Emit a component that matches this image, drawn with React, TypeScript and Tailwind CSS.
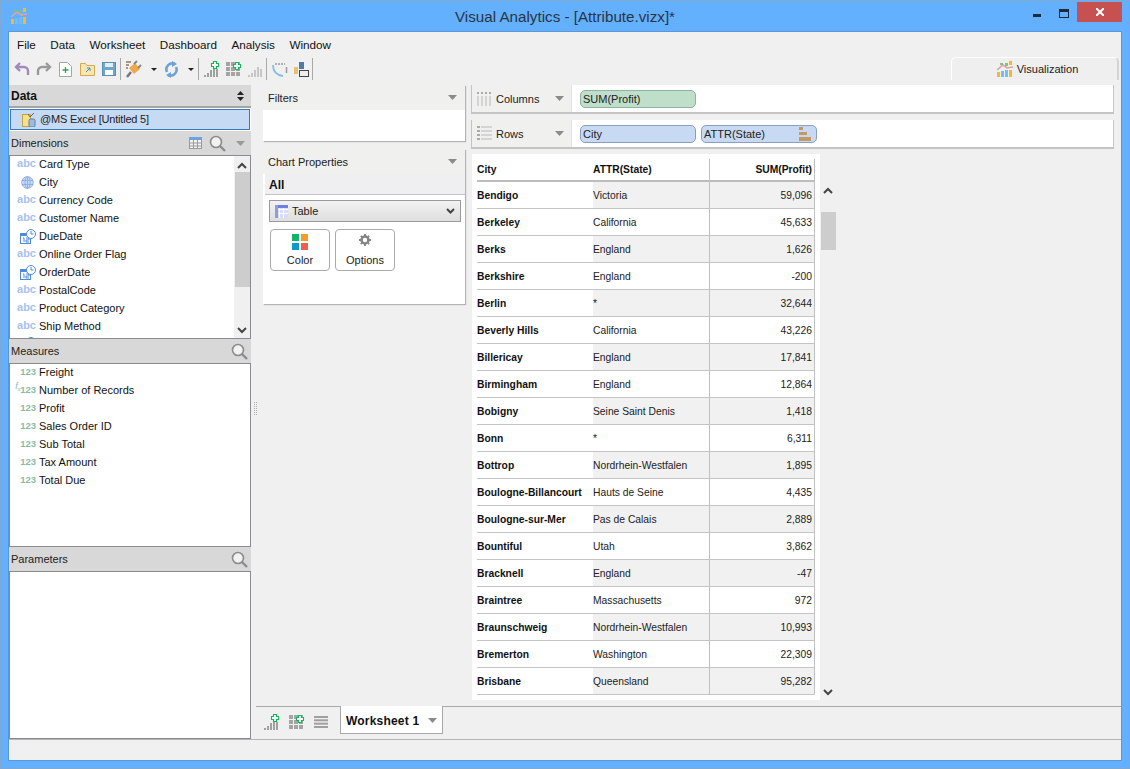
import React from "react";

const font = { fontFamily: '"Liberation Sans", Tahoma, sans-serif' };

const Caret = ({ c = "#8a8a8a", small }: { c?: string; small?: boolean }) => (
  <svg width={small ? 6 : 9} height={small ? 3 : 5} viewBox="0 0 9 5" preserveAspectRatio="none" className="shrink-0"><path d="M0 0h9L4.5 5z" fill={c} /></svg>
);

const Search = ({ c = "#8c8c8c" }: { c?: string }) => (
  <svg width="17" height="17" viewBox="0 0 17 17" className="shrink-0" fill="none">
    <circle cx="7" cy="7" r="5.5" stroke={c} strokeWidth="1.6" fill="#f2f2f2" />
    <path d="M11 11l5 5" stroke={c} strokeWidth="2.4" />
  </svg>
);

const LogoChart = ({ size = 16 }: { size?: number }) => (
  <svg width={size} height={size} viewBox="0 0 16 16" className="shrink-0">
    <rect x="0" y="11" width="3" height="5" fill="#fbb62f" />
    <rect x="4" y="10" width="3" height="6" fill="#6cc0f7" />
    <rect x="8" y="9" width="3" height="7" fill="#6cc0f7" />
    <rect x="12" y="9" width="3" height="7" fill="#fbb62f" />
    <path d="M0 9l6-5 4 3 6-1" stroke="#e0a0a8" strokeWidth="1.6" fill="none" />
    <rect x="3" y="2" width="3" height="2" fill="#7fc46f" />
    <rect x="8" y="2" width="3" height="3" fill="#7fc46f" />
    <rect x="12" y="0" width="3" height="4" fill="#fbb62f" />
  </svg>
);

const Abc = () => <span className="relative top-[-1px] text-[11px] font-bold leading-none text-[#a5c2ee]">abc</span>;

const Globe = () => (
  <svg width="13" height="13" viewBox="0 0 13 13" fill="none" stroke="#8fb0e6" strokeWidth="1" className="mr-[2px]">
    <circle cx="6.5" cy="6.5" r="5.8" fill="#c9d9f3" />
    <ellipse cx="6.5" cy="6.5" rx="2.6" ry="5.8" />
    <path d="M1 4.5h11M1 8.5h11M6.5 .7v11.6" />
  </svg>
);

const DateIcon = () => (
  <svg width="16" height="15" viewBox="0 0 16 15" fill="none">
    <rect x="0.5" y="4.5" width="10" height="10" fill="#fff" stroke="#4f8bd6" />
    <rect x="0" y="4" width="11" height="3" fill="#4f8bd6" />
    <path d="M3 9h1v4M6 9h3v2H6v2h3" stroke="#4f8bd6" strokeWidth="1" />
    <circle cx="11" cy="5" r="4.5" fill="#fff" stroke="#4f8bd6" />
    <path d="M11 2v3h2.5" stroke="#4f8bd6" />
  </svg>
);

const FieldRow = ({ icon, label }: { icon: React.ReactNode; label: string }) => (
  <div className="flex h-[18px] shrink-0 items-center">
    <div className="flex w-[29px] shrink-0 justify-end pr-[3px]">{icon}</div>
    <span className="text-[11px] leading-none text-[#111]">{label}</span>
  </div>
);

const Num = ({ f }: { f?: boolean }) => (
  <span className="relative text-[9.5px] leading-none font-bold text-[#8dbba6]">
    {f && <span className="absolute left-[-5px] top-[-3px] text-[9px] italic font-normal">f<sub className="text-[6px]">x</sub></span>}
    123
  </span>
);

const PanelHead = ({ label, children }: { label: string; children?: React.ReactNode }) => (
  <div className="flex h-[24px] shrink-0 items-center justify-between bg-[#d8d8d8] pl-[2px] pr-[3px] text-[11px] text-[#222]">
    <span className="pt-[1px]">{label}</span>
    <div className="flex items-center gap-[5px]">{children}</div>
  </div>
);

const dims: [string, "abc" | "geo" | "date"][] = [
  ["Card Type", "abc"], ["City", "geo"], ["Currency Code", "abc"], ["Customer Name", "abc"], ["DueDate", "date"],
  ["Online Order Flag", "abc"], ["OrderDate", "date"], ["PostalCode", "abc"], ["Product Category", "abc"], ["Ship Method", "abc"],
];
const measures = ["Freight", "Number of Records", "Profit", "Sales Order ID", "Sub Total", "Tax Amount", "Total Due"];

const rows: [string, string, string][] = [
  ["Bendigo", "Victoria", "59,096"], ["Berkeley", "California", "45,633"], ["Berks", "England", "1,626"],
  ["Berkshire", "England", "-200"], ["Berlin", "*", "32,644"], ["Beverly Hills", "California", "43,226"],
  ["Billericay", "England", "17,841"], ["Birmingham", "England", "12,864"], ["Bobigny", "Seine Saint Denis", "1,418"],
  ["Bonn", "*", "6,311"], ["Bottrop", "Nordrhein-Westfalen", "1,895"], ["Boulogne-Billancourt", "Hauts de Seine", "4,435"],
  ["Boulogne-sur-Mer", "Pas de Calais", "2,889"], ["Bountiful", "Utah", "3,862"], ["Bracknell", "England", "-47"],
  ["Braintree", "Massachusetts", "972"], ["Braunschweig", "Nordrhein-Westfalen", "10,993"], ["Bremerton", "Washington", "22,309"],
  ["Brisbane", "Queensland", "95,282"],
];

const Sep = () => <div className="mx-[3px] h-[22px] w-px bg-[#a8a8a8]" />;

const Plus = ({ x, y }: { x: number; y: number }) => (
  <path d={`M${x + 2.5} ${y + .5}h3v2h2v3h-2v2h-3v-2h-2v-3h2z`} fill="#fff" stroke="#12b85a" strokeWidth="1.1" />
);

const BarsPlus = ({ muted }: { muted?: boolean }) => (
  <svg width="16" height="16" viewBox="0 0 16 16" className="shrink-0">
    {[[0, 14, 2], [3, 12, 4], [6, 9, 7], [9, 6, 10], [12, 8, 8]].map(([x, y, h], i) => (
      <rect key={i} x={x} y={y} width="2" height={h} fill={muted ? "#c6c6c6" : "#a0a0a0"} />
    ))}
    {!muted && <Plus x={7} y={0} />}
  </svg>
);

const GridPlus = () => (
  <svg width="16" height="15" viewBox="0 0 16 15" className="shrink-0">
    {[0, 5, 10].flatMap((y) => [0, 5, 10].map((x) => <rect key={`${x}-${y}`} x={x} y={y} width="4" height="4" fill="#a4a4a4" />))}
    <Plus x={7} y={0} />
  </svg>
);

const Toolbar = () => (
  <div className="flex h-[24px] shrink-0 items-center pl-[5px]">
    <svg width="16" height="14" viewBox="0 0 16 14" fill="none" stroke="#a488bd" strokeWidth="2.4"><path d="M6 1L2 5l4 4" /><path d="M2 5h8a4 4 0 0 1 4 4v4" /></svg>
    <svg width="16" height="14" viewBox="0 0 16 14" fill="none" stroke="#9a9a9a" strokeWidth="2.4" className="ml-[6px]"><path d="M10 1l4 4-4 4" /><path d="M14 5H6a4 4 0 0 0-4 4v4" /></svg>
    <svg width="13" height="15" viewBox="0 0 13 15" className="ml-[7px]"><path d="M.5.5h8l4 4v10H.5z" fill="#fff" stroke="#a5a5a5" /><path d="M6.5 5v6M3.5 8h6" stroke="#2fa54f" strokeWidth="1.3" /></svg>
    <svg width="15" height="13" viewBox="0 0 15 13" className="ml-[8px]"><path d="M.5 12.5V.5h5l1.5 2h7.500v10z" fill="#fbe5b0" stroke="#d6a94f" /><path d="M6 9l4-4M7 5h3v3" stroke="#3c8fc9" fill="none" /></svg>
    <svg width="14" height="14" viewBox="0 0 14 14" className="ml-[7px]"><rect x=".5" y=".5" width="13" height="13" fill="#6fa6cc" stroke="#5a8fb5" /><rect x="3" y="1" width="8" height="4" fill="#e4eef6" /><rect x="3" y="8" width="8" height="5" fill="#fff" /></svg>
    <div className="ml-[1px]"><Sep /></div>
    <svg width="17" height="18" viewBox="0 0 17 18" className="ml-[1px]"><path d="M2 17l4-5" stroke="#777" strokeWidth="2.500" /><path d="M4 8l5 6 6-5-5-6z" fill="#f0a94a" /><path d="M9 4l3-3M13 8l3-3" stroke="#888" strokeWidth="2" /><path d="M1 2h5M1 5h3M1 8h2" stroke="#8a7a55" strokeWidth="1.500" /></svg>
    <div className="ml-[9px]"><Caret c="#222" small /></div>
    <svg width="15" height="17" viewBox="0 0 15 17" fill="none" stroke="#6fa3d8" strokeWidth="2.600" className="ml-[7px]"><path d="M11 3a6 6 0 0 0-8 8" /><path d="M4 14a6 6 0 0 0 8-8" /><path d="M8 0v6l5-3zM7 17v-6l-5 3z" fill="#6fa3d8" stroke="none" /></svg>
    <div className="ml-[9px]"><Caret c="#222" small /></div>
    <div className="ml-[1px]"><Sep /></div>
    <div className="ml-[2px]"><BarsPlus /></div>
    <div className="ml-[6px]"><GridPlus /></div>
    <div className="ml-[6px]"><BarsPlus muted /></div>
    <div className="-ml-px"><Sep /></div>
    <svg width="16" height="15" viewBox="0 0 16 15" fill="none" className="ml-[2px]"><path d="M3 2h10" stroke="#9a9a9a" strokeWidth="1.500" strokeDasharray="2 1" /><path d="M14.500 5v6" stroke="#9a9a9a" strokeWidth="1.500" /><path d="M1 3c0 6 3 10 10 11" stroke="#85bce8" strokeWidth="1.800" /></svg>
    <svg width="15" height="15" viewBox="0 0 15 15" className="ml-[6px]"><rect x="0" y="5" width="4" height="7" fill="#e9bf73" /><rect x="5" y="0" width="5" height="7" fill="#4f79a8" /><rect x="5.500" y="8.500" width="9" height="6" fill="#eee" stroke="#444" /></svg>
    <Sep />
  </div>
);

const ShelfBar = ({ kind, label, children }: { kind: "c" | "r"; label: string; children: React.ReactNode }) => (
  <div className="flex h-[27px] shrink-0 bg-white shadow-[0_1px_0_1px_#c4c4c4]">
    <div className="flex w-[100px] shrink-0 items-center border-r border-[#e4e4d8] bg-[#f0f0ee] pl-[5px]">
      {kind === "c" ? (
        <svg width="15" height="14" viewBox="0 0 15 14">{[0, 4, 8, 12].map((x) => <g key={x}><rect x={x} y="0" width="2" height="2" fill="#aaa" /><rect x={x} y="4" width="2" height="10" fill="#d4d4d4" /></g>)}</svg>
      ) : (
        <svg width="15" height="15" viewBox="0 0 15 15">{[0, 4, 8, 12].map((y) => <g key={y}><rect x="0" y={y} width="3" height="2" fill="#aaa" /><rect x="4" y={y} width="11" height="2" fill="#d4d4d4" /></g>)}</svg>
      )}
      <span className="ml-[4px] flex-1 pt-[2px] text-[11px] text-[#222]">{label}</span>
      <div className="mr-[7px]"><Caret /></div>
    </div>
    <div className="flex items-center gap-[5px] pl-[8px]">{children}</div>
  </div>
);

const Pill = ({ label, green, icon }: { label: string; green?: boolean; icon?: boolean }) => (
  <div className={`flex h-[18px] w-[116px] items-center justify-between rounded-[5px] border pl-[2px] pr-[5px] text-[11px] text-[#222] ${green ? "border-[#8fb3a0] bg-[#bfdfca]" : "border-[#8a9fc0] bg-[#c8d9f3]"}`}>
    <span className="pt-[1px]">{label}</span>
    {icon && (
      <svg width="12" height="14" viewBox="0 0 12 14"><rect x="0" y="0" width="4" height="3" fill="#c49a63" /><rect x="0" y="5" width="8" height="3" fill="#c49a63" /><rect x="0" y="10" width="12" height="4" fill="#c49a63" /></svg>
    )}
  </div>
);

const Card = ({ title, children, h }: { title: string; children: React.ReactNode; h: string }) => (
  <div className={`shrink-0 bg-white shadow-[1px_1px_1px_#b4b4b4] ${h}`}>
    <div className="flex h-[25px] items-center justify-between bg-[#f0f0ee] pl-[5px] pr-[8px] text-[11px] text-[#222]">
      <span className="pt-[2px]">{title}</span>
      <Caret />
    </div>
    {children}
  </div>
);

const PropBtn = ({ label, children }: { label: string; children: React.ReactNode }) => (
  <div className="flex h-[42px] w-[60px] flex-col items-center rounded-[4px] border border-[#aaa] bg-white pt-[4px]">
    <div className="h-[16px]">{children}</div>
    <span className="mt-[3px] text-[11px] leading-[14px] text-[#222]">{label}</span>
  </div>
);

const TableView = () => (
  <div className="flex min-h-0 flex-1">
    <div className="h-[546px] w-[348px] shrink-0 overflow-hidden bg-white pl-[5px] pr-[5px] pt-[5px] text-[10.3px]">
      <div className="flex h-[23px] items-center border-b-2 border-[#bdbdbd] font-bold text-[#111]">
        <div className="w-[116px] pt-[1px]">City</div>
        <div className="flex h-full w-[117px] items-center border-r border-[#c0c0c0] pt-[1px]">ATTR(State)</div>
        <div className="flex h-full flex-1 items-center justify-end border-r border-[#c0c0c0] pr-[2px] pt-[1px]">SUM(Profit)</div>
      </div>
      {rows.map(([a, b, c], i) => (
        <div key={a} className="flex h-[27px] border-b border-[#c4c4c4] text-[#222]">
          <div className="flex w-[116px] items-center whitespace-nowrap pt-[1px] font-bold text-[#111]">{a}</div>
          <div className={`flex w-[117px] items-center whitespace-nowrap border-r border-[#c0c0c0] pt-[1px] ${i % 2 === 0 ? "bg-[#f1f1f1]" : "bg-white"}`}>{b}</div>
          <div className={`flex flex-1 items-center justify-end border-r border-[#c0c0c0] pr-[2px] pt-[1px] ${i % 2 === 0 ? "bg-[#f1f1f1]" : "bg-white"}`}>{c}</div>
        </div>
      ))}
    </div>
    <div className="mt-[26px] flex h-[520px] w-[16px] shrink-0 flex-col items-center bg-[#f0f0f0]">
      <svg width="10" height="7" viewBox="0 0 10 7" className="mt-[7px]" fill="none" stroke="#444" strokeWidth="2"><path d="M1 6l4-4 4 4" /></svg>
      <div className="mt-[18px] h-[38px] w-[15px] bg-[#cdcdcd]" />
      <div className="flex-1" />
      <svg width="10" height="7" viewBox="0 0 10 7" className="mb-[4px]" fill="none" stroke="#444" strokeWidth="2"><path d="M1 1l4 4 4-4" /></svg>
    </div>
  </div>
);

export default function App() {
  return (
    <div className="flex h-[769px] w-[1130px] flex-col overflow-hidden border border-[#7ea9d4] bg-[#62b0ff] px-[7px] pb-[7px]" style={font}>
      <div className="relative flex h-[30px] shrink-0 items-center justify-center pt-[2px]">
        <div className="absolute left-[3px] top-[7px]"><LogoChart /></div>
        <span className="text-[15.2px] leading-none text-[#2a3542]">Visual Analytics - [Attribute.vizx]*</span>
        <div className="absolute right-0 top-[1px] flex items-start">
          <div className="mr-[18px] mt-[12px] h-[3px] w-[8px] bg-[#1f2a38]" />
          <div className="mr-[8px] mt-[7px] h-[9px] w-[10px] border border-t-[3px] border-[#1f2a38]" />
          <div className="flex h-[20px] w-[45px] items-center justify-center bg-[#c75050] text-white">
            <svg width="8" height="8" viewBox="0 0 8 8" stroke="#fff" strokeWidth="2"><path d="M0 0l8 8M8 0L0 8" /></svg>
          </div>
        </div>
      </div>

      <div className="flex min-h-0 flex-1 flex-col border border-[#5a97d6] bg-[#f0f0f0]">
        <div className="flex h-[25px] shrink-0 items-center gap-[14.5px] pl-[8px] text-[11.7px] text-[#111]">
          {["File", "Data", "Worksheet", "Dashboard", "Analysis", "Window"].map((m) => <span key={m}>{m}</span>)}
        </div>

        <div className="relative">
          <Toolbar />
          <div className="absolute right-[2px] top-0 flex h-[23px] w-[168px] items-center justify-center gap-[4px] rounded-t-[5px] border-l border-t border-r-2 border-l-white border-t-white border-r-[#d4d4d4] bg-[#efefef] pl-[6px] text-[11px] text-[#222]">
            <LogoChart />
            <span>Visualization</span>
          </div>
        </div>

        <div className="mt-[4px] flex min-h-0 flex-1">
          <div className="flex w-[242px] shrink-0 flex-col">
            <div className="flex h-[23px] shrink-0 items-center justify-between border-b-2 border-[#a4a4a4] bg-[#d8d8d8] pl-[2px] pr-[7px] text-[12px] font-bold text-[#111]">
              <span className="pt-[1px]">Data</span>
              <svg width="7" height="10" viewBox="0 0 7 10" fill="#222"><path d="M0 4l3.500-4L7 4zM0 6l3.500 4L7 6z" /></svg>
            </div>
            <div className="flex h-[23px] shrink-0 items-center bg-white pl-[1px]">
              <div className="flex h-[21px] w-[240px] items-center gap-[4px] border border-[#3c76bd] bg-[#c7daf4] pl-[11px] text-[11px] tracking-[-0.2px] text-[#222]">
                <svg width="14" height="14" viewBox="0 0 14 14"><rect x=".5" y="1.500" width="8" height="12" fill="#f6e08a" stroke="#c2a347" /><path d="M6 1l2 3 4-4" stroke="#666" fill="none" /><rect x="7" y="6" width="6" height="8" rx="1.500" fill="#9dbde0" stroke="#5b7ca3" /></svg>
                <span>@MS Excel [Untitled 5]</span>
              </div>
            </div>
            <PanelHead label="Dimensions">
              <svg width="13" height="12" viewBox="0 0 13 12" className="mr-[2px]"><rect x=".5" y=".5" width="12" height="11" fill="#f3f3f3" stroke="#9a9a9a" /><rect x="0" y="0" width="13" height="3" fill="#6da3dd" /><path d="M0 6h13M0 9h13M4.500 3v9M8.500 3v9" stroke="#9a9a9a" /></svg>
              <Search />
              <div className="ml-[5px] mr-[3px]"><Caret c="#9a9a9a" /></div>
            </PanelHead>
            <div className="flex h-[184px] shrink-0 overflow-hidden border border-[#8a8a92] bg-white">
              <div className="flex flex-1 flex-col overflow-hidden">
                <div className="-mt-px flex flex-col">
                  {dims.map(([l, t]) => (
                    <FieldRow key={l} label={l} icon={t === "abc" ? <Abc /> : t === "geo" ? <Globe /> : <DateIcon />} />
                  ))}
                  <FieldRow label="" icon={<DateIcon />} />
                </div>
              </div>
              <div className="flex w-[16px] shrink-0 flex-col items-center bg-[#f0f0f0]">
                <svg width="10" height="7" viewBox="0 0 10 7" className="mb-[3px] mt-[6px] shrink-0" fill="none" stroke="#444" strokeWidth="2"><path d="M1 6l4-4 4 4" /></svg>
                <div className="h-[115px] w-[15px] shrink-0 bg-[#cdcdcd]" />
                <div className="flex-1" />
                <svg width="10" height="7" viewBox="0 0 10 7" className="mb-[4px] shrink-0" fill="none" stroke="#444" strokeWidth="2"><path d="M1 1l4 4 4-4" /></svg>
              </div>
            </div>
            <PanelHead label="Measures"><Search /></PanelHead>
            <div className="h-[184px] shrink-0 overflow-hidden border border-[#8a8a92] bg-white">
              <div className="-mt-px">
                {measures.map((m) => <FieldRow key={m} label={m} icon={<Num f={m === "Number of Records"} />} />)}
              </div>
            </div>
            <PanelHead label="Parameters"><Search /></PanelHead>
            <div className="min-h-0 flex-1 border border-[#8a8a92] bg-white" />
          </div>

          <div className="flex flex-1 min-w-0 flex-col">
            <div className="flex min-h-0 flex-1">
              <div className="flex w-[12px] shrink-0 items-center pl-[3px]">
                <div className="mt-[30px] h-[13px] w-[3px] border-x border-dotted border-[#b0b0b0]" />
              </div>
              <div className="flex w-[202px] shrink-0 flex-col gap-[8px]">
                <Card title="Filters" h="h-[56px]"><div /></Card>
                <Card title="Chart Properties" h="h-[155px]">
                  <div className="ml-[2px] flex h-[21px] items-center border-b border-[#c4c4c4] bg-[#efeff1] pl-[4px] pt-[2px] text-[12px] font-bold text-[#111]">All</div>
                  <div className="ml-[6px] mr-[4px] mt-[5px] flex h-[22px] items-center justify-between border border-[#9a9a9a] bg-[linear-gradient(#f2f2f2,#dedede)] pl-[5px] pr-[5px] text-[11px] text-[#222]">
                    <div className="flex items-center gap-[4px]">
                      <svg width="13" height="13" viewBox="0 0 13 13"><rect width="13" height="13" fill="#d8dcf8" /><path d="M0 4.500h13M0 8.500h13M4.500 0v13M8.500 0v13" stroke="#fff" /><rect width="13" height="3" fill="#6f7fe0" /><rect width="3" height="13" fill="#8f9be8" /></svg>
                      <span className="pt-[1px]">Table</span>
                    </div>
                    <svg width="9" height="6" viewBox="0 0 9 6" fill="none" stroke="#444" strokeWidth="2"><path d="M1 1l3.500 3.500L8 1" /></svg>
                  </div>
                  <div className="mt-[7px] flex gap-[5px] pl-[7px]">
                    <PropBtn label="Color">
                      <svg width="16" height="16" viewBox="0 0 16 16"><rect width="7" height="7" fill="#12b46b" /><rect x="9" width="7" height="7" fill="#f59b2b" /><rect y="9" width="7" height="7" fill="#0f9bc9" /><rect x="9" y="9" width="7" height="7" fill="#ef5f50" /></svg>
                    </PropBtn>
                    <PropBtn label="Options">
                      <svg width="12" height="12" viewBox="0 0 12 12"><circle cx="6" cy="6" r="3.500" fill="none" stroke="#858585" strokeWidth="2.500" /><path d="M6 0v12M0 6h12M1.800 1.800l8.400 8.400M10.200 1.800l-8.400 8.400" stroke="#858585" strokeWidth="1.800" strokeDasharray="2.200 7.600" /></svg>
                    </PropBtn>
                  </div>
                </Card>
              </div>
              <div className="ml-[7px] flex min-w-0 flex-1 flex-col pr-[8px]">
                <div className="flex flex-col gap-[8px]">
                  <ShelfBar kind="c" label="Columns"><Pill label="SUM(Profit)" green /></ShelfBar>
                  <ShelfBar kind="r" label="Rows"><Pill label="City" /><Pill label="ATTR(State)" icon /></ShelfBar>
                </div>
                <div className="mt-[7px] flex min-h-0 flex-1"><TableView /></div>
              </div>
            </div>

            <div className="ml-[5px] mt-[5px] flex h-[33px] shrink-0 border-t border-[#a8a8a8] pl-[8px]">
              <div className="flex h-full w-[76px] items-center gap-[9px] pb-[4px] pt-[2px]">
                <BarsPlus />
                <GridPlus />
                <svg width="14" height="12" viewBox="0 0 14 12" fill="#a0a0a0"><rect width="14" height="2" /><rect y="3.300" width="14" height="2" /><rect y="6.700" width="14" height="2" /><rect y="10" width="14" height="2" /></svg>
              </div>
              <div className="-mt-px flex h-[28px] w-[103px] items-center justify-between border-x border-b border-[#a8a8a8] bg-white pl-[5px] pr-[5px] pt-[2px] text-[12px] font-bold tracking-[0.2px] text-[#111]">
                <span>Worksheet 1</span>
                <Caret />
              </div>
            </div>
          </div>
        </div>

        <div className="h-[21px] shrink-0 border-t border-[#b4b4b4] bg-[#f0f0f0]" />
      </div>
    </div>
  );
}
